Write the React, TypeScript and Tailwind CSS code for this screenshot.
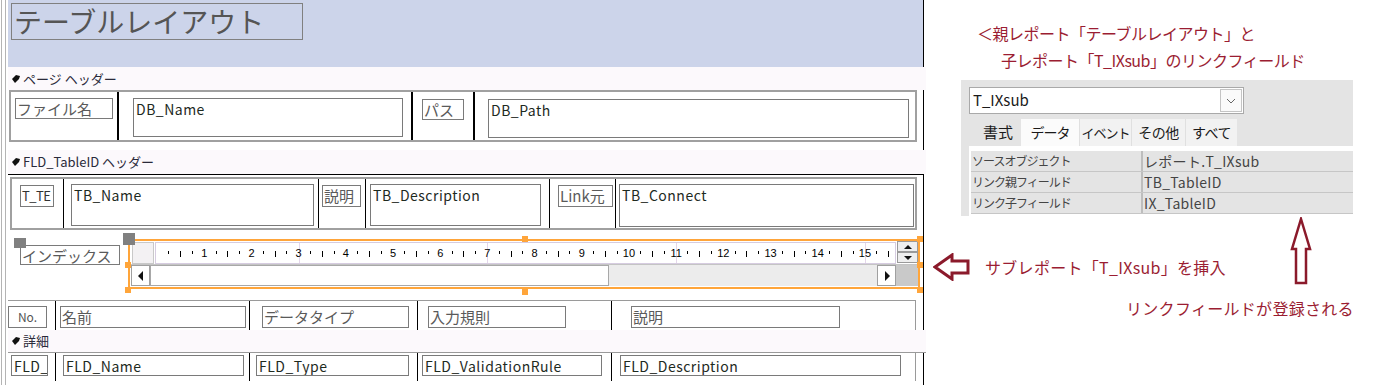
import React from 'react';

const RED = 'text-[#9b1d32]';

const BarIcon = () => (
  <svg width="8" height="8" viewBox="0 0 8 8" className="shrink-0">
    <path d="M0 4 L4 0 L8 1 L7 4 L3 8 Z" fill="#111" />
  </svg>
);

const SectionBar: React.FC<{ label: string; className?: string }> = ({ label, className = '' }) => (
  <div className={`w-[918px] flex items-center gap-[3px] pl-[4px] bg-[#fcf9fc] text-[13px] text-[#2a2a3a] ${className}`}>
    <BarIcon />
    <span>{label}</span>
  </div>
);

const Label: React.FC<{ className: string; children: React.ReactNode }> = ({ className, children }) => (
  <div className={`border border-[#7a7a7a] text-[15px] leading-[19px] text-[#5a5a5a] pl-[1px] whitespace-nowrap overflow-hidden ${className}`}>
    {children}
  </div>
);

const Field: React.FC<{ className: string; children: React.ReactNode }> = ({ className, children }) => (
  <div className={`border border-[#7a7a7a] text-[14px] leading-[18px] text-[#1e2a1e] tracking-[0.5px] pl-[2px] pt-[1px] whitespace-nowrap overflow-hidden ${className}`}>
    {children}
  </div>
);

const Tri: React.FC<{ dir: 'up' | 'down' | 'left' | 'right' }> = ({ dir }) => {
  const d = {
    up: 'M0 5 L4 1 L8 5 Z',
    down: 'M0 1 L8 1 L4 5 Z',
    left: 'M5 0 L5 10 L0 5 Z',
    right: 'M1 0 L1 10 L6 5 Z',
  }[dir];
  const vertical = dir === 'up' || dir === 'down';
  return (
    <svg width={vertical ? 8 : 6} height={vertical ? 6 : 10} viewBox={vertical ? '0 0 8 6' : '0 0 6 10'}>
      <path d={d} fill="#111" />
    </svg>
  );
};

const ticks = Array.from({ length: 62 }, (_, i) => i + 1);

const Ruler = () => (
  <div className="flex-1 h-[22px] mt-[1px] ml-[1px] border border-[#d6cce0] bg-white overflow-hidden flex pl-[7px] font-['Liberation_Sans',sans-serif]">
    {ticks.map((k) => (
      <div key={k} className="relative w-[11.8px] shrink-0 flex justify-center">
        {k % 16 === 12 && <div className="absolute top-0 bottom-0 left-1/2 w-px bg-[#e4d6ea]" />}
        {k % 4 === 0 ? (
          <span className="relative text-[11px] leading-none mt-[5px] text-black">{k / 4}</span>
        ) : k % 4 === 2 ? (
          <div className="relative w-px h-[6px] bg-black mt-[8px]" />
        ) : (
          <div className="relative w-px h-[3px] bg-black mt-[8px]" />
        )}
      </div>
    ))}
  </div>
);

const Handle: React.FC<{ className: string }> = ({ className }) => (
  <div className={`absolute w-[6px] h-[6px] bg-[#ffa53a] ${className}`} />
);

const Subreport = () => (
  <div className="relative ml-[8px] mt-[9px] w-[792px] h-[50px] border-2 border-[#ffa53a] flex flex-col">
    <div className="absolute -left-[7px] -top-[8px] w-[12px] h-[12px] bg-[#808080]" />
    <Handle className="-left-[5px] top-[21px]" />
    <Handle className="-left-[5px] top-[46px]" />
    <Handle className="left-[392px] -top-[5px]" />
    <Handle className="left-[392px] top-[48px]" />
    <Handle className="left-[787px] -top-[5px]" />
    <Handle className="left-[787px] top-[21px]" />
    <Handle className="left-[787px] top-[46px]" />
    <div className="h-[24px] flex pl-[2px] border-b border-[#c4c4c4]">
      <div className="w-[22px] h-[22px] mt-[1px] border border-[#c8c8c8] bg-[#f3f1f3]" />
      <Ruler />
      <div className="w-[21px] ml-[1px] flex flex-col">
        <div className="h-[11px] border border-[#9a9a9a] bg-[#eeeeee] flex items-center justify-center">
          <Tri dir="up" />
        </div>
        <div className="h-[11px] border border-[#9a9a9a] bg-[#eeeeee] flex items-center justify-center">
          <Tri dir="down" />
        </div>
      </div>
    </div>
    <div className="h-[21px] flex pl-[1px]">
      <div className="w-[19px] border border-[#a0a0a0] bg-white flex items-center justify-center">
        <Tri dir="left" />
      </div>
      <div className="w-[459px] border border-[#a8a8a8] bg-white" />
      <div className="flex-1 bg-[#ececec]" />
      <div className="w-[19px] border border-[#a0a0a0] bg-white flex items-center justify-center">
        <Tri dir="right" />
      </div>
      <div className="w-[22px] bg-[#c9c9c9]" />
    </div>
  </div>
);

const Report = () => (
  <div className="w-[916px] shrink-0 flex flex-col">
    <div className="h-[67px] bg-[#ccd4ea] border-r border-black pt-[3px] pl-[3px]">
      <div className="w-[292px] h-[37px] border border-[#808080] text-[28px] leading-[34px] text-[#555] pl-[2px]">
        テーブルレイアウト
      </div>
    </div>
    <SectionBar label="ページ ヘッダー" className="h-[23px]" />
    <div className="h-[60px] border-r border-black pl-[1px]">
      <div className="w-[908px] h-[52px] border-2 border-[#a0a0a0] flex bg-white">
        <div className="w-[108px] border-r-2 border-black pl-[4px] pt-[6px]">
          <Label className="w-[98px] h-[21px]">ファイル名</Label>
        </div>
        <div className="w-[294px] border-r-2 border-black pl-[14px] pt-[6px]">
          <Field className="w-[270px] h-[39px]">DB_Name</Field>
        </div>
        <div className="w-[62px] border-r-2 border-black pl-[9px] pt-[7px]">
          <Label className="w-[42px] h-[21px]">パス</Label>
        </div>
        <div className="flex-1 pl-[13px] pt-[7px]">
          <Field className="w-[421px] h-[39px]">DB_Path</Field>
        </div>
      </div>
    </div>
    <SectionBar label="FLD_TableID ヘッダー" className="h-[24px]" />
    <div className="h-[126px] border-t border-r border-black">
      <div className="ml-[2px] mt-[2px] w-[907px] h-[53px] border-2 border-[#a0a0a0] flex">
        <div className="w-[52px] border-r border-black pl-[8px] pt-[6px]">
          <div className="w-[34px] h-[22px] border border-[#7a7a7a] text-[13px] leading-[20px] text-[#333] tracking-[-0.5px] whitespace-nowrap overflow-hidden pl-[1px]">
            T_TE
          </div>
        </div>
        <div className="w-[255px] border-r border-black pl-[7px] pt-[5px]">
          <Field className="w-[243px] h-[42px]">TB_Name</Field>
        </div>
        <div className="w-[47px] border-r border-black pl-[3px] pt-[6px]">
          <Label className="w-[39px] h-[22px]">説明</Label>
        </div>
        <div className="w-[184px] border-r border-black pl-[4px] pt-[5px]">
          <Field className="w-[171px] h-[42px]">TB_Description</Field>
        </div>
        <div className="w-[66px] border-r border-black pl-[8px] pt-[6px]">
          <Label className="w-[55px] h-[22px]">Link元</Label>
        </div>
        <div className="flex-1 pl-[3px] pt-[5px]">
          <Field className="w-[295px] h-[43px]">TB_Connect</Field>
        </div>
      </div>
      <div className="flex items-start">
        <div className="relative ml-[12px] mt-[15px]">
          <Label className="w-[100px] h-[20px]">インデックス</Label>
          <div className="absolute -left-[6px] -top-[7px] w-[12px] h-[10px] bg-[#808080]" />
        </div>
        <Subreport />
      </div>
    </div>
    <div className="h-[30px] border-r border-black">
      <div className="w-[908px] h-[30px] border-t border-r border-[#9a9a9a] flex">
        <div className="w-[48px] border-r border-black pt-[5px]">
          <div className="w-[39px] h-[22px] border border-[#7a7a7a] text-[12px] leading-[20px] text-[#555] text-center">No.</div>
        </div>
        <div className="w-[194px] border-r border-black pl-[4px] pt-[5px]">
          <Label className="w-[186px] h-[22px]">名前</Label>
        </div>
        <div className="w-[168px] border-r border-black pl-[12px] pt-[5px]">
          <Label className="w-[147px] h-[22px]">データタイプ</Label>
        </div>
        <div className="w-[194px] border-r border-black pl-[10px] pt-[5px]">
          <Label className="w-[138px] h-[22px]">入力規則</Label>
        </div>
        <div className="flex-1 pl-[19px] pt-[5px]">
          <Label className="w-[209px] h-[22px]">説明</Label>
        </div>
      </div>
    </div>
    <SectionBar label="詳細" className="h-[23px] border-b border-[#9a9a9a]" />
    <div className="h-[32px] border-r border-black">
      <div className="w-[908px] h-[28px] border-r border-[#9a9a9a] flex">
        <div className="w-[48px] border-r border-black pl-[3px] pt-[2px]">
          <Field className="w-[37px] h-[21px]">FLD_</Field>
        </div>
        <div className="w-[194px] border-r border-black pl-[7px] pt-[2px]">
          <Field className="w-[181px] h-[21px]">FLD_Name</Field>
        </div>
        <div className="w-[168px] border-r border-black pl-[6px] pt-[2px]">
          <Field className="w-[153px] h-[21px]">FLD_Type</Field>
        </div>
        <div className="w-[194px] border-r border-black pl-[4px] pt-[2px]">
          <Field className="w-[180px] h-[21px]">FLD_ValidationRule</Field>
        </div>
        <div className="flex-1 pl-[8px] pt-[2px]">
          <Field className="w-[281px] h-[21px]">FLD_Description</Field>
        </div>
      </div>
    </div>
  </div>
);

const props = [
  ['ソースオブジェクト', 'レポート.T_IXsub'],
  ['リンク親フィールド', 'TB_TableID'],
  ['リンク子フィールド', 'IX_TableID'],
];

const tabs = [
  { label: '書式', cls: 'w-[46px] text-[15px]' },
  { label: 'データ', cls: 'w-[58px] bg-[#fbfbfb] text-[14px] tracking-[-1px]' },
  { label: 'イベント', cls: 'w-[52px] bg-[#f2f2f2] border-l border-[#e0e0e0] text-[13px] tracking-[-1px]' },
  { label: 'その他', cls: 'w-[54px] bg-[#f2f2f2] border-l border-[#e0e0e0] text-[14px] tracking-[-0.5px]' },
  { label: 'すべて', cls: 'w-[52px] bg-[#f2f2f2] border-l border-[#e0e0e0] text-[14px] tracking-[-0.5px]' },
];

const PropertySheet = () => (
  <div className="ml-[37px] mt-[6px] w-[392px] h-[136px] bg-[#e4e4e4] pt-[7px] pl-[8px] flex flex-col">
    <div className="w-[275px] h-[27px] border border-[#a9a9a9] bg-white flex items-center justify-between pl-[3px] pr-[1px]">
      <span className="text-[15px] text-[#1a1a1a]">T_IXsub</span>
      <div className="w-[22px] h-[23px] border border-[#c4c4c4] bg-[#fafafa] flex items-center justify-center">
        <svg width="10" height="6" viewBox="0 0 10 6">
          <path d="M1 1 L5 5 L9 1" fill="none" stroke="#666" strokeWidth="1" />
        </svg>
      </div>
    </div>
    <div className="mt-[5px] h-[27px] flex pl-[6px]">
      {tabs.map((t) => (
        <div key={t.label} className={`h-[27px] shrink-0 flex items-center justify-center whitespace-nowrap text-[#1a1a1a] ${t.cls}`}>
          {t.label}
        </div>
      ))}
    </div>
    <div className="flex-1 bg-white pt-[5px] pl-[2px]">
      {props.map(([k, v]) => (
        <div key={k} className="h-[21px] flex border-b border-[#c6c6c6] bg-[#e4e4e4]">
          <div className="w-[172px] border-r-2 border-[#bdbdbd] text-[12px] leading-[20px] tracking-[-1px] text-[#444] pl-[1px]">{k}</div>
          <div className="flex-1 text-[14px] leading-[20px] text-[#444] pl-[1px] tracking-[0.3px]">{v}</div>
        </div>
      ))}
    </div>
  </div>
);

const LeftArrow = () => (
  <svg width="37" height="28" viewBox="0 0 37 28" className="shrink-0">
    <path d="M2 14 L19 2 L19 8 L35 8 L35 20 L19 20 L19 26 Z" fill="white" stroke="#8b1a2b" strokeWidth="3" strokeLinejoin="miter" />
  </svg>
);

const UpArrow = () => (
  <svg width="22" height="68" viewBox="0 0 22 68" className="shrink-0 mt-[1px]">
    <path d="M11 2 L20 32 L16 32 L16 66 L6 66 L6 32 L2 32 Z" fill="white" stroke="#8b1a2b" strokeWidth="2.5" />
  </svg>
);

const Notes = () => (
  <div className="flex-1 flex flex-col">
    <div className={`pt-[20px] pl-[53px] text-[16px] leading-[27px] tracking-[-0.5px] ${RED}`}>
      <div>＜親レポート「テーブルレイアウト」と</div>
      <div className="pl-[24px]">子レポート「T_IXsub」のリンクフィールド</div>
    </div>
    <PropertySheet />
    <div className="flex items-start">
      <div className="w-[366px] shrink-0 flex items-center mt-[37px] pl-[9px]">
        <LeftArrow />
        <span className={`ml-[15px] text-[16px] tracking-[0.3px] ${RED}`}>サブレポート「T_IXsub」を挿入</span>
      </div>
      <UpArrow />
    </div>
    <div className={`pl-[202px] mt-[12px] text-[16px] leading-[22px] tracking-[0.3px] ${RED}`}>リンクフィールドが登録される</div>
  </div>
);

export default function App() {
  return (
    <div className="w-[1396px] h-[385px] overflow-hidden bg-white flex font-['Noto_Sans_CJK_JP',sans-serif]">
      <div className="w-[8px] shrink-0 flex">
        <div className="w-px ml-[1px] bg-[#b4b4b4]" />
        <div className="w-px ml-[3px] bg-[#b4b4b4]" />
      </div>
      <Report />
      <Notes />
    </div>
  );
}
